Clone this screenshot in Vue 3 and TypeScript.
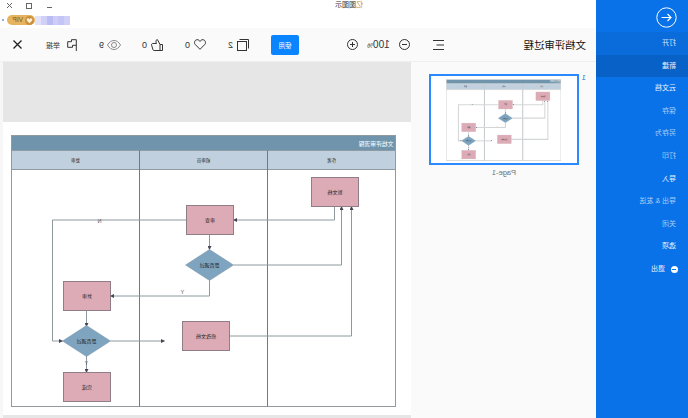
<script setup lang="ts">
interface MenuItem {
  label: string
  tone: 'bright' | 'dim'
  state?: 'hover' | 'active'
}

// the whole screen is a mirror image, so everything is laid out left-to-right
// and .mirror flips it at the end
const menu: MenuItem[] = [
  { label: '打开', tone: 'dim', state: 'hover' },
  { label: '新建', tone: 'bright', state: 'active' },
  { label: '云文档', tone: 'bright' },
  { label: '保存', tone: 'dim' },
  { label: '另存为', tone: 'dim' },
  { label: '打印', tone: 'dim' },
  { label: '导入', tone: 'bright' },
  { label: '导出 & 发送', tone: 'dim' },
  { label: '关闭', tone: 'dim' },
  { label: '选项', tone: 'bright' },
]

const boxes = [
  { x: 37, y: 42, label: '新文档' },
  { x: 162, y: 70, label: '审查' },
  { x: 285, y: 146, label: '复审' },
  { x: 285, y: 237, label: '完成' },
  { x: 166, y: 186, label: '修改文档' },
]

const diamonds = [
  { cx: 186, cy: 129.5 },
  { cx: 309, cy: 205.5 },
]

const links = [
  'M61 71V84.5H162',
  'M162 129.5H54V71',
  'M166 200.5H44V71',
  'M186 99V114',
  'M186 145V160.5H285',
  'M209 84.5H343V205.5H333',
  'M309 175V191',
  'M285 205.5H231',
  'M309 220V237',
]

const lanes = [
  { x: 64, label: '作者' },
  { x: 192, label: '初审员' },
  { x: 320, label: '复审' },
]

const blurCells = ['#cfcff8', '#c4c4f6', '#cdcdf7', '#bcbcf4', '#d0d0f8', '#e2e2fb']
</script>

<template>
  <div class="mirror">
    <aside class="side">
      <div class="back">
        <svg width="21" height="21" viewBox="0 0 21 21" fill="none" stroke="#fff">
          <circle cx="10.5" cy="10.5" r="9.7" />
          <path d="M15.5 10.5H6M9.5 7l-3.500 3.500 3.500 3.500" stroke-width="1.2" />
        </svg>
      </div>
      <div
        v-for="item in menu"
        :key="item.label"
        class="side-item"
        :class="[item.tone, item.state]"
      >
        {{ item.label }}
      </div>
      <div class="side-item bright exit">
        <span class="exit-dot"></span>
        退出
      </div>
    </aside>

    <main class="main">
      <header class="top">
        <div class="win-row">
          <span class="app-name"><b class="app-first">亿</b>图图示</span>
          <div class="win-ctrl">
            <svg width="7" height="7" viewBox="0 0 7 7" stroke="#666"><path d="M1 5.500H6" /></svg>
            <svg width="7" height="7" viewBox="0 0 7 7" fill="none" stroke="#666"><rect x="1.5" y="1.5" width="5" height="5" /></svg>
            <svg width="7" height="7" viewBox="0 0 7 7" stroke="#666"><path d="M1 1L6 6M6 1L1 6" /></svg>
          </div>
        </div>
        <div class="user-row">
          <div class="blur-name">
            <span v-for="(c, i) in blurCells" :key="i" :style="{ background: c }"></span>
          </div>
          <span class="vip">
            <svg width="9" height="9" viewBox="0 0 9 9">
              <circle cx="4.5" cy="4.500" r="4.500" fill="#c98f3d" />
              <path d="M4.500 7.300L2 4.700C1.300 3.800 1.800 2.300 3 2.300c.7 0 1.200.4 1.500 1 .3-.6.8-1 1.500-1 1.200 0 1.700 1.500 1 2.400z" fill="#fdf0d2" />
            </svg>
            VIP
          </span>
          <i class="user-dot"></i>
        </div>
      </header>

      <div class="toolbar">
        <h1 class="doc-title">文档评审过程</h1>
        <svg class="t-menu" width="11" height="10" viewBox="0 0 11 10" fill="none" stroke="#333">
          <path d="M0 .5H11M0 5H7.500M0 9.500H11" />
        </svg>
        <svg class="t-minus" width="11" height="11" viewBox="0 0 11 11" fill="none" stroke="#333">
          <circle cx="5.5" cy="5.5" r="5" /><path d="M3 5.5H8" />
        </svg>
        <span class="zoom-val">100<small>%</small></span>
        <svg class="t-plus" width="11" height="11" viewBox="0 0 11 11" fill="none" stroke="#333">
          <circle cx="5.5" cy="5.5" r="5" /><path d="M3 5.5H8M5.5 3V8" />
        </svg>
        <button class="use-btn">使用</button>
        <div class="stat s-copy">
          <svg width="12" height="12" viewBox="0 0 12 12" fill="none" stroke="#333">
            <rect x="2.500" y="2.500" width="9" height="9" /><path d="M.5 9.500V.5H9.500" />
          </svg>
          <span>2</span>
        </div>
        <div class="stat s-heart">
          <svg width="12" height="11" viewBox="0 0 12 11" fill="none" stroke="#333">
            <path d="M6 10.300L1.300 5.600C-.2 4 .5 1 3 .7 4.400.6 5.400 1.400 6 2.400 6.600 1.400 7.600.6 9 .7c2.500.3 3.200 3.300 1.700 4.900z" />
          </svg>
          <span>0</span>
        </div>
        <div class="stat s-thumb">
          <svg width="12" height="12" viewBox="0 0 12 12" fill="none" stroke="#333">
            <path d="M.5 5.500H3V11.500H.5zM3 5.500L5.500.7C6.800.7 7.300 1.700 7 2.800L6.600 4.500H10.300C11.300 4.500 11.700 5.300 11.400 6.100L10.100 10.500C9.900 11.100 9.500 11.500 8.900 11.500H3" />
          </svg>
          <span>0</span>
        </div>
        <div class="stat s-eye">
          <svg width="14" height="10" viewBox="0 0 14 10" fill="none" stroke="#8a8a8a">
            <path d="M.5 5C2.200 2 4.500.5 7 .5S11.800 2 13.500 5C11.800 8 9.500 9.500 7 9.500S2.200 8 .5 5z" /><circle cx="7" cy="5" r="2.500" />
          </svg>
          <span>9</span>
        </div>
        <div class="stat s-flag">
          <svg width="10" height="12" viewBox="0 0 10 12" fill="none" stroke="#333">
            <path d="M.7 12V.7H5.500V2.700H9.300V8.300H4.500V6.300H.7" />
          </svg>
          <span class="flag-text">举报</span>
        </div>
        <svg class="t-close" width="9" height="9" viewBox="0 0 9 9" stroke="#222" stroke-width="1.300">
          <path d="M.5 .5L8.500 8.500M8.500 .5L.5 8.500" />
        </svg>
      </div>

      <div class="work">
        <section class="pages">
          <span class="page-no">1</span>
          <div class="thumb-wrap">
            <div class="thumb">
              <svg class="thumb-svg" width="115" height="82" viewBox="0 0 384.500 271.500">
                <use href="#flow" />
              </svg>
            </div>
            <div class="page-name">Page-1</div>
          </div>
        </section>

        <section class="canvas">
          <div class="paper">
            <svg class="flow" width="386" height="273" viewBox="-.5 -.5 386 273">
              <defs>
                <marker id="tip" markerWidth="4" markerHeight="4" refX="3.500" refY="2" orient="auto" markerUnits="userSpaceOnUse">
                  <path d="M0 0L4 2L0 4z" fill="#445" />
                </marker>
              </defs>
              <g id="flow">
                <rect x="0" y="0" width="384" height="15" fill="#6f94ab" />
                <rect x="0" y="15" width="384" height="19" fill="#c0d0de" />
                <text x="2" y="10" class="band-title">文档评审流程</text>
                <text v-for="l in lanes" :key="l.label" :x="l.x" y="26.500" class="tx head" text-anchor="middle">{{ l.label }}</text>
                <rect x="0" y="0" width="384" height="271" class="frame" />
                <path d="M0 15H384M0 34H384" class="frame" />
                <path d="M128 15V271M256 15V271" class="lane-line" />
                <path v-for="d in links" :key="d" :d="d" class="link" marker-end="url(#tip)" />
                <g v-for="b in boxes" :key="b.label">
                  <rect :x="b.x" :y="b.y" width="47" height="29" class="box" />
                  <text :x="b.x + 23.5" :y="b.y + 16.500" class="tx" text-anchor="middle">{{ b.label }}</text>
                </g>
                <g v-for="d in diamonds" :key="d.cx">
                  <path :d="`M${d.cx - 24} ${d.cy}L${d.cx} ${d.cy - 15.500}L${d.cx + 24} ${d.cy}L${d.cx} ${d.cy + 15.500}z`" class="dia" />
                  <text :x="d.cx" :y="d.cy + 2" class="tx" text-anchor="middle">是否通过</text>
                </g>
                <text x="296" y="87" class="lbl" text-anchor="middle">N</text>
                <text x="213" y="158" class="lbl" text-anchor="middle">Y</text>
                <text x="309" y="229" class="lbl" text-anchor="middle">Y</text>
              </g>
            </svg>
          </div>
        </section>
        <div class="edge"></div>
      </div>
    </main>
  </div>
</template>

<style>
html,
body {
  margin: 0;
  background: #fff;
}
</style>

<style scoped>
.mirror {
  width: 688px;
  height: 418px;
  display: flex;
  overflow: hidden;
  transform: scaleX(-1);
  background: #fff;
  font-family: "Liberation Sans", "Noto Sans CJK SC", sans-serif;
  color: #222;
}

.side {
  width: 92px;
  flex: none;
  background: #0a72e8;
  color: #fff;
}
.back {
  height: 32px;
  padding: 7px 0 0 11px;
  box-sizing: border-box;
}
.back svg {
  display: block;
}
.side-item {
  height: 22.600px;
  line-height: 22.600px;
  padding-left: 12px;
  font-size: 7px;
}
.side-item.bright {
  color: #edf5ff;
}
.side-item.dim {
  color: #a8cdf7;
}
.side-item.hover {
  background: #0a6bdb;
  color: #d2e5fb;
}
.side-item.active {
  background: #0861c7;
  color: #edf5ff;
}
.exit {
  display: flex;
  align-items: center;
  gap: 6px;
  padding-left: 10px;
}
.exit-dot {
  width: 7px;
  height: 7px;
  border-radius: 50%;
  background: #fff;
  position: relative;
}
.exit-dot::after {
  content: "";
  position: absolute;
  left: 1.500px;
  top: 3px;
  width: 4px;
  height: 1px;
  background: #0a72e8;
}

.main {
  flex: 1;
  min-width: 0;
  display: flex;
  flex-direction: column;
}

.top {
  height: 28px;
  flex: none;
  background: #fff;
}
.win-row {
  height: 10px;
  display: flex;
  align-items: center;
}
.app-name {
  margin-left: 233px;
  font-size: 7px;
  line-height: 10px;
  color: #333;
}
.app-first {
  font-weight: 400;
  color: #c8873a;
}
.win-ctrl {
  margin-left: auto;
  margin-right: 6px;
  display: flex;
  gap: 13px;
}
.win-ctrl svg {
  display: block;
}
.user-row {
  height: 12px;
  margin-top: 4px;
  display: flex;
  align-items: center;
  justify-content: flex-end;
  padding-right: 2px;
}
.blur-name {
  display: flex;
  height: 9px;
  width: 35px;
}
.blur-name span {
  flex: 1;
}
.vip {
  width: 28px;
  height: 10px;
  border-radius: 5px;
  background: #e6b35e;
  color: #7a5520;
  font-size: 6.500px;
  line-height: 10px;
  display: flex;
  align-items: center;
  gap: 2px;
  padding-left: 1px;
  box-sizing: border-box;
}
.vip svg {
  display: block;
  flex: none;
}
.user-dot {
  width: 2px;
  height: 2px;
  border-radius: 50%;
  background: #7a93c8;
  margin-left: 3px;
}

.toolbar {
  height: 34px;
  flex: none;
  display: flex;
  align-items: center;
  background: #fafafa;
  border-bottom: 1px solid #eee;
  box-sizing: border-box;
  padding-left: 10px;
}
.doc-title {
  margin: 0;
  width: 62px;
  font-size: 10.400px;
  font-weight: 400;
  white-space: nowrap;
  color: #111;
}
.t-menu {
  margin-left: 80px;
}
.t-minus {
  margin-left: 23px;
}
.zoom-val {
  width: 25px;
  margin-left: 8px;
  font-size: 10px;
  text-align: center;
  white-space: nowrap;
  color: #333;
}
.zoom-val small {
  font-size: 6.500px;
}
.t-plus {
  margin-left: 8px;
}
.use-btn {
  margin-left: 48px;
  width: 28px;
  height: 20px;
  padding: 0;
  border: 0;
  border-radius: 2px;
  background: #0a84ff;
  color: #fff;
  font: 6.500px "Liberation Sans", "Noto Sans CJK SC", sans-serif;
}
.stat {
  display: flex;
  align-items: center;
  gap: 4px;
  font-size: 9px;
  color: #333;
}
.stat svg {
  display: block;
}
.s-copy {
  margin-left: 22px;
}
.s-heart {
  margin-left: 22px;
}
.s-thumb {
  margin-left: 22px;
}
.s-eye {
  margin-left: 21px;
  gap: 3px;
}
.s-flag {
  margin-left: 22px;
  gap: 7px;
}
.flag-text {
  font-size: 7px;
}
.t-close {
  margin-left: 24px;
}

.work {
  flex: 1;
  min-height: 0;
  display: flex;
}
.pages {
  width: 185px;
  flex: none;
  position: relative;
  background: #fafafa;
}
.page-no {
  position: absolute;
  left: 10px;
  top: 11px;
  font-size: 8px;
  color: #2b7de0;
}
.thumb-wrap {
  padding: 12px 0 0 17px;
}
.thumb {
  width: 150px;
  height: 91px;
  box-sizing: border-box;
  border: 2px solid #2b8aff;
  background: #fff;
  display: flex;
  justify-content: center;
  padding-top: 3px;
}
.thumb-svg {
  display: block;
  --link-w: 3.500px;
  --link-c: #d3d6d8;
  --frame-w: 3px;
  --frame-c: #d5d8da;
  --lane-w: 3.500px;
  --lane-c: #c6cbce;
  --box-c: #d8c4cb;
}
.page-name {
  width: 150px;
  margin-top: 3px;
  text-align: center;
  font-size: 7.500px;
  color: #707070;
}

.canvas {
  width: 408px;
  flex: none;
  background: #e6e6e6;
  padding-top: 60px;
  display: flex;
  flex-direction: column;
}
.edge {
  flex: 1;
  background: #f7f7f7;
}
.paper {
  width: 408px;
  height: 293px;
  flex: none;
  background: #fff;
  padding: 13px 0 0 15px;
  box-sizing: border-box;
}
.flow {
  display: block;
}

.frame {
  fill: none;
  stroke: var(--frame-c, #8f9aa1);
  stroke-width: var(--frame-w, 1);
}
.lane-line {
  fill: none;
  stroke: var(--lane-c, #6e7b83);
  stroke-width: var(--lane-w, 1);
}
.link {
  fill: none;
  stroke: var(--link-c, #8e989d);
  stroke-width: var(--link-w, 1);
}
.box {
  fill: #dcabb5;
  stroke: var(--box-c, #8f7d88);
  stroke-width: 1;
}
.dia {
  fill: #7ea4bf;
  stroke: #7a93a6;
  stroke-width: .5;
}
.tx {
  font-size: 5px;
  fill: #222;
}
.tx.head {
  font-size: 4.500px;
}
.band-title {
  font-size: 5.800px;
  fill: #fff;
}
.lbl {
  font-size: 5.500px;
  fill: #555;
}
</style>
